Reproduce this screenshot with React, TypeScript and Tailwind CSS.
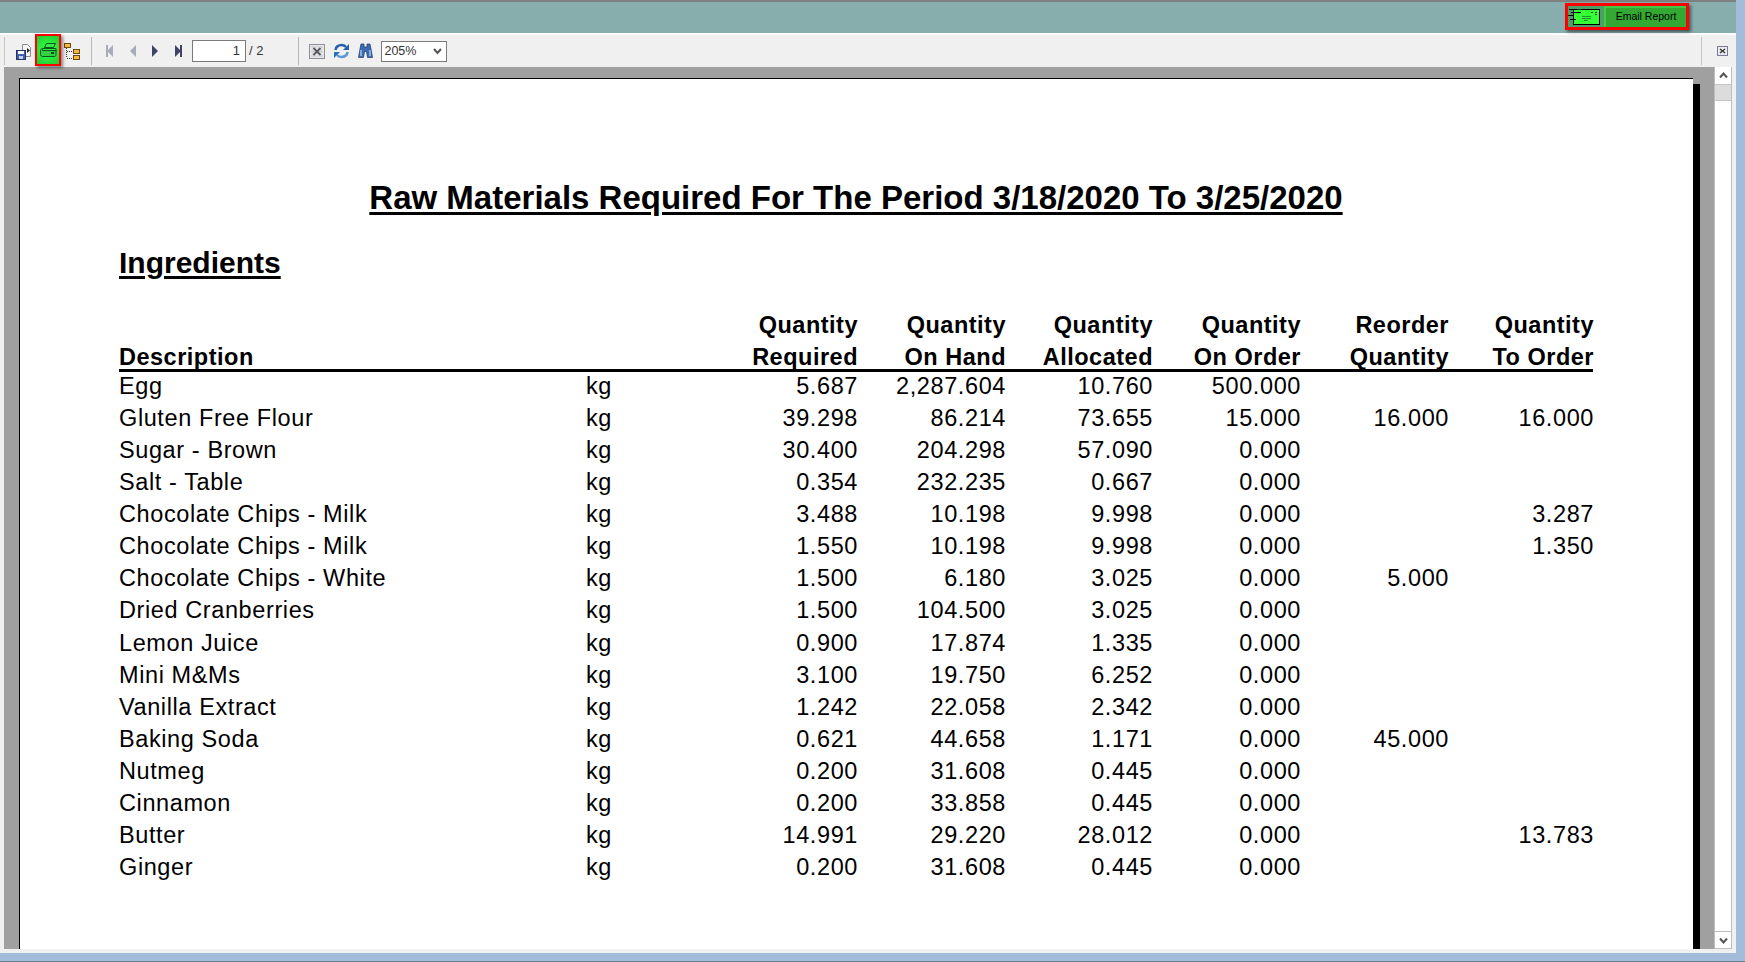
const rows: string[][] = [
  ["Egg", "5.687", "2,287.604", "10.760", "500.000", "", ""],
  ["Gluten Free Flour", "39.298", "86.214", "73.655", "15.000", "16.000", "16.000"],
  ["Sugar - Brown", "30.400", "204.298", "57.090", "0.000", "", ""],
  ["Salt - Table", "0.354", "232.235", "0.667", "0.000", "", ""],
  ["Chocolate Chips - Milk", "3.488", "10.198", "9.998", "0.000", "", "3.287"],
  ["Chocolate Chips - Milk", "1.550", "10.198", "9.998", "0.000", "", "1.350"],
  ["Chocolate Chips - White", "1.500", "6.180", "3.025", "0.000", "5.000", ""],
  ["Dried Cranberries", "1.500", "104.500", "3.025", "0.000", "", ""],
  ["Lemon Juice", "0.900", "17.874", "1.335", "0.000", "", ""],
  ["Mini M&Ms", "3.100", "19.750", "6.252", "0.000", "", ""],
  ["Vanilla Extract", "1.242", "22.058", "2.342", "0.000", "", ""],
  ["Baking Soda", "0.621", "44.658", "1.171", "0.000", "45.000", ""],
  ["Nutmeg", "0.200", "31.608", "0.445", "0.000", "", ""],
  ["Cinnamon", "0.200", "33.858", "0.445", "0.000", "", ""],
  ["Butter", "14.991", "29.220", "28.012", "0.000", "", "13.783"],
  ["Ginger", "0.200", "31.608", "0.445", "0.000", "", ""],
];

const headers = [
  ["Quantity", "Required"],
  ["Quantity", "On Hand"],
  ["Quantity", "Allocated"],
  ["Quantity", "On Order"],
  ["Reorder", "Quantity"],
  ["Quantity", "To Order"],
];

const cols = "grid grid-cols-[467px_60px_212px_148px_147px_148px_148px_145px]";

function Triangle({ dir, bar, color }: { dir: "l" | "r"; bar?: boolean; color: string }) {
  return (
    <svg width="10" height="12" viewBox="0 0 10 12" fill={color}>
      {dir === "l" ? <path d="M8 0v12L2 6z" /> : <path d="M2 0v12l6-6z" />}
      {bar && (dir === "l" ? <rect x="1" y="0" width="2" height="12" /> : <rect x="7" y="0" width="2" height="12" />)}
    </svg>
  );
}

export default function App() {
  return (
    <div className="flex h-[962px] w-[1745px] flex-col overflow-hidden border-b border-[#6b7f93] bg-[#a3bcd9] font-['Liberation_Sans',Arial,sans-serif]">
      <div className="mr-[9px] flex h-[953px] flex-col bg-[#f0f0f0]">
        {/* teal title strip */}
        <div className="flex h-[35px] shrink-0 items-start justify-end border-b-2 border-t-2 border-b-white border-t-[#7f7f7f] bg-[#87adac] pr-[47px] pt-[1px]">
          <div className="flex h-[27px] w-[124px] items-center border-[3px] border-[#ff0000] bg-[#4f9d6b] shadow-[2px_2px_3px_rgba(0,0,0,0.5)]">
            <svg width="36" height="21" viewBox="0 0 36 21" className="shrink-0" shapeRendering="crispEdges">
              <rect x="5" y="3" width="27" height="16" fill="#000" />
              <rect x="6" y="4" width="25" height="14" fill="#35ff35" />
              <path d="M1 3.500h9M3 6.500h10M0 9.500h6M2 13.500h6" stroke="#000" fill="none" />
              <path d="M9 3.500h4M23 6.500h2M27 6.500h2M27 8.500h2" stroke="#0a4a0a" fill="none" />
              <path d="M14 10.500h9M14 12.500h9M16 14.500h4" stroke="#1c9c2c" fill="none" />
            </svg>
            <div className="flex h-full flex-1 items-center justify-center border-l-2 border-t-2 border-[#45c845] bg-[#33a833] pb-[1px] text-[10.500px] text-black">
              Email Report
            </div>
          </div>
        </div>

        {/* toolbar */}
        <div className="flex h-[32px] shrink-0 items-center text-[#333]">
          <div className="ml-[4px] h-[28px] w-[1px] bg-[#c4c4c4]" />
          <div className="ml-[11px] flex h-[22px] w-[16px] items-center">
            <svg width="16" height="17" viewBox="0 0 16 17">
              <path d="M6.500 1.500h5l3 3v9h-8z" fill="#f4f4f4" stroke="#8a8a8a" />
              <path d="M11 5l3 2.500-3 2.500z" fill="#223" />
              <rect x="0.500" y="7.500" width="9" height="9" fill="#3f5fb0" stroke="#25335f" />
              <rect x="2" y="8" width="6" height="3" fill="#fff" />
              <rect x="3" y="13" width="4" height="3" fill="#c8d0e8" />
            </svg>
          </div>
          <div className="relative ml-[3px] -mt-[3px] flex h-[32px] w-[26px] items-center justify-center border-[2px] border-[#ff0000] bg-[radial-gradient(circle,#2cf03c_40%,#22c834_100%)] shadow-[2px_2px_3px_rgba(0,0,0,0.45)]">
            <svg width="17" height="14" viewBox="0 0 17 14" fill="none" stroke="#14501c">
              <path d="M6.500 .5h9l-2 4h-9z" fill="#3ce84e" />
              <path d="M2.500 5.500h13.500v3" />
              <path d="M.5 7.500c0-1 1-2 2-2v2h13.500v4c0 1-.5 2-1.500 2h-12c-1 0-2-1-2-2z" fill="#2ed242" />
              <rect x="11" y="9" width="3" height="2" fill="#14501c" stroke="none" />
            </svg>
          </div>
          <div className="ml-[3px] flex h-[22px] w-[16px] items-center">
            <svg width="16" height="17" viewBox="0 0 16 17" shapeRendering="crispEdges">
              <rect x="0.500" y="0.500" width="6" height="4" fill="#f5b942" stroke="#6b4a10" />
              <rect x="9.500" y="6.500" width="6" height="4" fill="#f5b942" stroke="#6b4a10" />
              <rect x="9.500" y="12.500" width="6" height="4" fill="#f5b942" stroke="#6b4a10" />
              <path d="M2.500 5v10h6M2.500 8.500h6" stroke="#333" strokeDasharray="1 1" fill="none" />
            </svg>
          </div>
          <div className="ml-[11px] h-[28px] w-[1px] bg-[#b9b9b9]" />
          <div className="ml-[13px] flex w-[78px] items-center justify-between">
            <Triangle dir="l" bar color="#a9adbb" />
            <Triangle dir="l" color="#a9adbb" />
            <Triangle dir="r" color="#3d4466" />
            <Triangle dir="r" bar color="#3d4466" />
          </div>
          <div className="ml-[9px] flex h-[22px] w-[54px] items-center justify-end border border-[#7a7a7a] bg-white pr-[5px] text-[13px]">
            1
          </div>
          <span className="ml-[3px] text-[13px]">/ 2</span>
          <div className="ml-[35px] h-[28px] w-[1px] bg-[#b9b9b9]" />
          <div className="ml-[10px] flex w-[64px] items-center justify-between">
            <svg width="16" height="15" viewBox="0 0 16 15">
              <rect x="0.500" y="0.500" width="15" height="14" fill="#e6e6e6" stroke="#8f8f9f" />
              <path d="M2 3h12M2 7.500h12M2 12h12M4 2v11M12 2v11" stroke="#cfcfcf" />
              <path d="M4.500 4l7 7M11.500 4l-7 7" stroke="#55555f" strokeWidth="1.800" />
            </svg>
            <svg width="17" height="16" viewBox="0 0 17 16" fill="none">
              <path d="M2.500 7c0-3 3-5 6-5 2 0 3.500 .8 4.500 2" stroke="#2b5fa8" strokeWidth="2.600" />
              <path d="M14.500 9c0 3-3 5-6 5-2 0-3.500-.8-4.500-2" stroke="#5a9ad8" strokeWidth="2.600" />
              <path d="M16 1v6h-6z" fill="#2b5fa8" />
              <path d="M1 15V9h6z" fill="#2b6fb8" />
            </svg>
            <svg width="15" height="16" viewBox="0 0 15 16">
              <path d="M3 1h3v3h3V1h3l1 5 1.500 8.500H9.500l-1-6h-2l-1 6H.5L2 6z" fill="#3a6db5" stroke="#1c3563" strokeWidth="0.700" />
              <path d="M3 7v6M12 7v6" stroke="#a9c7ea" strokeWidth="1.400" />
            </svg>
          </div>
          <div className="ml-[8px] flex h-[21px] w-[66px] items-center justify-between border border-[#7a7a7a] bg-white pl-[2px] pr-[4px] text-[12.500px]">
            <span>205%</span>
            <svg width="9" height="7" viewBox="0 0 9 7" fill="none" stroke="#555" strokeWidth="2">
              <path d="M1 1l3.500 4L8 1" />
            </svg>
          </div>
          <div className="ml-auto mr-[4px] flex items-center gap-[15px]">
            <div className="h-[28px] w-[1px] bg-[#c4c4c4]" />
            <svg width="11" height="10" viewBox="0 0 11 10" className="mr-[4px]">
              <rect x="0.500" y="0.500" width="10" height="9" fill="#e9e9ee" stroke="#7a7a99" />
              <path d="M3 3l5 4M8 3l-5 4" stroke="#333" strokeWidth="1.300" />
            </svg>
          </div>
        </div>

        {/* report viewport */}
        <div className="flex min-h-0 flex-1 pl-[4px] pr-[4px]">
          <div className="flex min-w-0 flex-1 bg-[#a0a0a0] pl-[15px] pr-[14px] pt-[11px]">
            <div className="min-w-0 flex-1 border-l border-t border-black bg-white pl-[99px] pr-[100px] text-black">
              <h1 className="mt-[100px] text-center text-[33px] font-bold leading-[38px] underline underline-offset-[3px]">
                Raw Materials Required For The Period 3/18/2020 To 3/25/2020
              </h1>
              <h2 className="mt-[29px] text-[30px] font-bold leading-[34px] underline underline-offset-[3px]">
                Ingredients
              </h2>
              <div className={`${cols} mt-[29px] h-[63px] border-b-[3px] border-black text-[23.500px] font-bold leading-[32px] tracking-[0.500px]`}>
                <div className="self-start pt-[32px]">Description</div>
                <div />
                {headers.map((h) => (
                  <div key={h[1]} className="text-right">
                    <div>{h[0]}</div>
                    <div>{h[1]}</div>
                  </div>
                ))}
              </div>
              <div className="-mt-[2.500px] text-[23.500px] leading-[32.130px] tracking-[0.600px]">
                {rows.map((r, i) => (
                  <div key={i} className={cols}>
                    <div>{r[0]}</div>
                    <div>kg</div>
                    {r.slice(1).map((v, j) => (
                      <div key={j} className="text-right">{v}</div>
                    ))}
                  </div>
                ))}
              </div>
            </div>
            <div className="mt-[6px] w-[7px] shrink-0 bg-black" />
          </div>
          {/* scrollbar */}
          <div className="flex w-[18px] flex-col border-x border-b border-[#bdbdbd] bg-white">
            <div className="flex h-[17px] items-center justify-center">
              <svg width="9" height="7" viewBox="0 0 9 7" fill="none" stroke="#555" strokeWidth="2">
                <path d="M1 5.500l3.500-4 3.500 4" />
              </svg>
            </div>
            <div className="h-[17px] border-y border-[#c4c4c4] bg-[#dcdcdc]" />
            <div className="flex-1" />
            <div className="flex h-[17px] items-center justify-center border-t border-[#bdbdbd]">
              <svg width="9" height="7" viewBox="0 0 9 7" fill="none" stroke="#555" strokeWidth="2">
                <path d="M1 1.500l3.500 4 3.500-4" />
              </svg>
            </div>
          </div>
        </div>
        <div className="h-[4px] shrink-0" />
      </div>
    </div>
  );
}
